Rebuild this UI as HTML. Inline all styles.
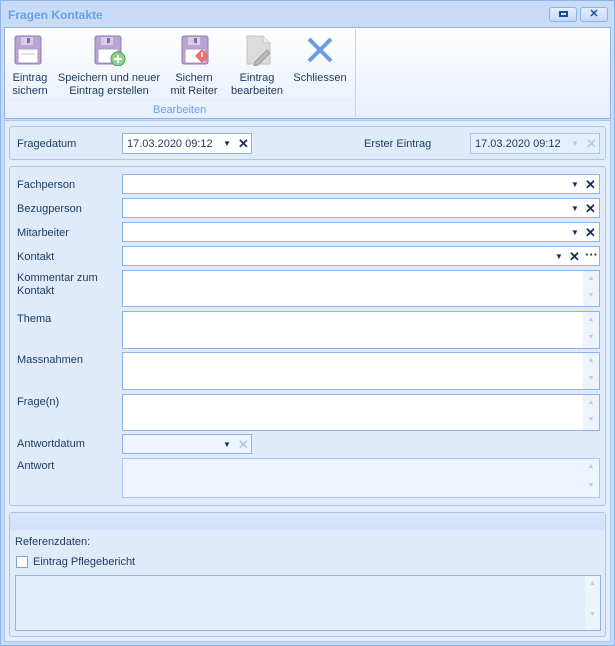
<!DOCTYPE html>
<html><head><style>
*{box-sizing:border-box;margin:0;padding:0}
body{width:615px;height:646px;overflow:hidden;background:#c5d9f5;font-family:"Liberation Sans",Tahoma,sans-serif;font-size:11px;color:#1e395b;position:relative}
.a{position:absolute}
.win{left:0;top:0;width:615px;height:646px;border:1px solid #8fb2e8;background:#c9dcf7}
.title{left:8px;top:8px;font-weight:bold;font-size:12px;color:#6d9fe9}
.tb{top:7px;width:28px;height:15px;border:1px solid #8fb2e8;border-radius:3px;background:linear-gradient(#e3eefd,#c5d9f6);font-size:11px;font-weight:bold;color:#1e4a9a;text-align:center;line-height:12px}
.ribbon{left:4px;top:27px;width:607px;height:92px;background:linear-gradient(#ffffff,#e6effc);border:1px solid #8fb2e8}
.btn{text-align:center;color:#1e395b;font-size:11px;line-height:13px}
.content{left:4px;top:120px;width:607px;height:522px;background:#e3edfc;border:1px solid #a9c6ef}
.panel{border:1px solid #a9c6ef;border-radius:3px;background:#dfeafb}
.lbl{color:#1e395b;font-size:11px}
.in{background:#fff;border:1px solid #8fb2e8}
.dd{font-size:8px;color:#15305f}
.x{font-weight:bold;font-size:13px;color:#15305f;line-height:13px}
.sb{right:0;top:0;bottom:0;width:16px;background:#eef4fd;color:#b8cdea;font-size:7px;text-align:center}
</style></head><body>
<div class="a win"></div>
<div class="a title">Fragen Kontakte</div>
<div class="a tb" style="left:549px"><span style="display:inline-block;width:9px;height:6px;border:2px solid #1e4a9a;margin-top:3px"></span></div>
<div class="a tb" style="left:580px">✕</div>
<div class="a ribbon"></div>
<div class="a" style="left:355px;top:29px;width:1px;height:88px;background:#c3d6f0"></div>
<div class="a" style="left:10px;top:100px;width:340px;height:1px;background:#e3ecf8"></div>
<div class="a" style="left:153px;top:104px;color:#6d9fe9;font-size:11px">Bearbeiten</div>

<svg class="a" style="left:12px;top:34px" width="32" height="32"><rect x="3" y="2" width="26" height="28" rx="2" fill="#b9a5d4" stroke="#8f7bb0"/><rect x="9" y="3" width="12" height="8" fill="#d7cde8"/><rect x="15" y="4" width="3" height="5" fill="#7e6aa0"/><rect x="6" y="15" width="20" height="14" fill="#fff" stroke="#a79ac4"/><line x1="9" y1="20" x2="23" y2="20" stroke="#c7c7e0"/></svg>
<svg class="a" style="left:92px;top:34px" width="36" height="32"><rect x="3" y="2" width="26" height="28" rx="2" fill="#b9a5d4" stroke="#8f7bb0"/><rect x="9" y="3" width="12" height="8" fill="#d7cde8"/><rect x="15" y="4" width="3" height="5" fill="#7e6aa0"/><rect x="6" y="15" width="20" height="14" fill="#fff" stroke="#a79ac4"/><circle cx="26" cy="25" r="7" fill="#8ed18e" stroke="#4e9e4e"/><path d="M26 21v8M22 25h8" stroke="#fff" stroke-width="2"/></svg>
<svg class="a" style="left:179px;top:34px" width="36" height="32"><rect x="3" y="2" width="26" height="28" rx="2" fill="#b9a5d4" stroke="#8f7bb0"/><rect x="9" y="3" width="12" height="8" fill="#d7cde8"/><rect x="15" y="4" width="3" height="5" fill="#7e6aa0"/><rect x="6" y="15" width="20" height="14" fill="#fff" stroke="#a79ac4"/><path d="M23 15l7 7-7 7-7-7z" fill="#ee6f6f"/><path d="M23 18v5" stroke="#fff" stroke-width="1.5"/></svg>
<svg class="a" style="left:243px;top:34px" width="32" height="32"><path d="M4 2h16l7 7v21H4z" fill="#dcdcdc" stroke="#c4c4c4"/><path d="M20 2v7h7" fill="#eee" stroke="#c4c4c4"/><path d="M12 28l12-12 3 3-12 12-4 1z" fill="#bbb" stroke="#999"/></svg>
<svg class="a" style="left:304px;top:35px" width="32" height="30"><path d="M5 4l22 22M27 4L5 26" stroke="#6b9ce0" stroke-width="4"/></svg>

<div class="a btn" style="left:10px;top:72px;width:40px">Eintrag<br>sichern</div>
<div class="a btn" style="left:56px;top:72px;width:106px">Speichern und neuer<br>Eintrag erstellen</div>
<div class="a btn" style="left:166px;top:72px;width:56px">Sichern<br>mit Reiter</div>
<div class="a btn" style="left:228px;top:72px;width:58px">Eintrag<br>bearbeiten</div>
<div class="a btn" style="left:292px;top:72px;width:56px">Schliessen</div>

<div class="a content"></div>
<div class="a panel" style="left:9px;top:126px;width:597px;height:34px"></div>
<div class="a lbl" style="left:17px;top:138px">Fragedatum</div>
<div class="a in" style="left:122px;top:133px;width:130px;height:21px;padding:4px 0 0 4px">17.03.2020 09:12<span class="a dd" style="left:100px;top:5px">▼</span><span class="a x" style="left:115px;top:3px">✕</span></div>
<div class="a lbl" style="left:364px;top:138px">Erster Eintrag</div>
<div class="a" style="left:470px;top:133px;width:130px;height:21px;padding:4px 0 0 4px;background:#e6effc;border:1px solid #a9c6ef">17.03.2020 09:12<span class="a dd" style="left:100px;top:5px;color:#b5cbe9">▼</span><span class="a x" style="left:115px;top:3px;color:#b5cbe9">✕</span></div>

<div class="a panel" style="left:9px;top:166px;width:597px;height:340px"></div>
<div class="a lbl" style="left:17px;top:179px">Fachperson</div>
<div class="a lbl" style="left:17px;top:203px">Bezugperson</div>
<div class="a lbl" style="left:17px;top:227px">Mitarbeiter</div>
<div class="a lbl" style="left:17px;top:251px">Kontakt</div>
<div class="a lbl" style="left:17px;top:272px;line-height:13px">Kommentar zum<br>Kontakt</div>
<div class="a lbl" style="left:17px;top:313px">Thema</div>
<div class="a lbl" style="left:17px;top:354px">Massnahmen</div>
<div class="a lbl" style="left:17px;top:396px">Frage(n)</div>
<div class="a lbl" style="left:17px;top:438px">Antwortdatum</div>
<div class="a lbl" style="left:17px;top:460px">Antwort</div>

<div class="a in" style="left:122px;top:174px;width:478px;height:20px"><span class="a dd" style="left:448px;top:5px">▼</span><span class="a x" style="left:462px;top:3px">✕</span></div>
<div class="a in" style="left:122px;top:198px;width:478px;height:20px"><span class="a dd" style="left:448px;top:5px">▼</span><span class="a x" style="left:462px;top:3px">✕</span></div>
<div class="a in" style="left:122px;top:222px;width:478px;height:20px"><span class="a dd" style="left:448px;top:5px">▼</span><span class="a x" style="left:462px;top:3px">✕</span></div>
<div class="a in" style="left:122px;top:246px;width:478px;height:20px"><span class="a dd" style="left:432px;top:5px">▼</span><span class="a x" style="left:446px;top:3px">✕</span><span class="a x" style="left:462px;top:1px">···</span></div>
<div class="a in" style="left:122px;top:270px;width:478px;height:37px"><div class="a sb"><div style="margin-top:4px">▲</div><div style="margin-top:10px">▼</div></div></div>
<div class="a in" style="left:122px;top:311px;width:478px;height:38px"><div class="a sb"><div style="margin-top:4px">▲</div><div style="margin-top:11px">▼</div></div></div>
<div class="a in" style="left:122px;top:352px;width:478px;height:38px"><div class="a sb"><div style="margin-top:4px">▲</div><div style="margin-top:11px">▼</div></div></div>
<div class="a in" style="left:122px;top:394px;width:478px;height:37px"><div class="a sb"><div style="margin-top:4px">▲</div><div style="margin-top:10px">▼</div></div></div>
<div class="a" style="left:122px;top:434px;width:130px;height:20px;background:#eef5ff;border:1px solid #8fb2e8"><span class="a dd" style="left:100px;top:5px">▼</span><span class="a x" style="left:115px;top:3px;color:#b5cbe9">✕</span></div>
<div class="a" style="left:122px;top:458px;width:478px;height:40px;background:#eef5ff;border:1px solid #a9c6ef"><div class="a sb" style="background:#eef5ff"><div style="margin-top:4px">▲</div><div style="margin-top:12px">▼</div></div></div>

<div class="a panel" style="left:9px;top:512px;width:597px;height:125px"></div>
<div class="a" style="left:10px;top:513px;width:595px;height:17px;background:linear-gradient(#dbe7fa,#d0e1f9)"></div>
<div class="a lbl" style="left:15px;top:536px">Referenzdaten:</div>
<div class="a" style="left:16px;top:556px;width:12px;height:12px;border:1px solid #7da2ce;background:#fff"></div>
<div class="a lbl" style="left:33px;top:556px">Eintrag Pflegebericht</div>
<div class="a" style="left:15px;top:575px;width:586px;height:56px;border:1px solid #8fb2e8;background:#e3edfc"><div class="a sb" style="width:15px;background:#eef4fd"><div style="margin-top:4px">▲</div><div style="margin-top:24px">▼</div></div></div>
</body></html>
